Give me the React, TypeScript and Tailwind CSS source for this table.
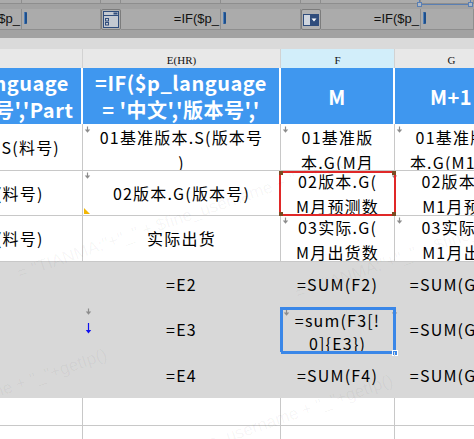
import type { ReactNode } from 'react'

const cjk = 'font-[Noto_Sans_CJK_SC,Noto_Sans,sans-serif]'

// tiny grey "down" marker drawn in the top-left corner of some cells
function Marker({ className = '' }: { className?: string }) {
	return (
		<svg className={`absolute h-[7px] w-[7px] ${className}`} viewBox="0 0 7 7">
			<path d="M3.5 0.5v3.5" stroke="#8c8c8c" strokeWidth="1.2" />
			<path d="M0.8 3.5h5.4L3.5 6.8z" fill="#8c8c8c" />
		</svg>
	)
}

function Cell({
	w,
	lines = [],
	className = '',
	children,
}: {
	w: string
	lines?: string[]
	className?: string
	children?: ReactNode
}) {
	return (
		<div className={`relative shrink-0 border-r ${w} ${className}`}>
			<div className="flex h-full w-full flex-col items-center justify-center overflow-hidden">
				{lines.map((l, i) => (
					<div key={i} className="whitespace-nowrap">
						{l}
					</div>
				))}
			</div>
			{children}
		</div>
	)
}

function Cursor() {
	return <div className="ml-[2px] mt-[3px] h-[12px] w-[3px] rounded-[1px] bg-[#1d4f8c] shadow-[inset_1px_0_0_#4f7fb8]" />
}

function Toolbar() {
	const field = 'h-full border-r border-b border-[#8e8e8e] bg-[#ababab]'
	const txt = 'flex items-center justify-end pr-[1px] text-[13px] text-[#111] font-[Liberation_Sans,Arial,sans-serif]'
	return (
		<div className="relative h-[38px] bg-[#a2a2a2]">
			{/* strip of cut-off fields above */}
			<div className="flex h-[4px]">
				<div className={`${field} w-[22px]`} />
				<div className={`${field} w-[79px]`} />
				<div className={`${field} w-[20px]`} />
				<div className={`${field} w-[100px]`} />
				<div className={`${field} w-[80px]`} />
				<div className={`${field} w-[20px]`} />
				<div className={`${field} w-[100px]`} />
				<div className={`${field} flex-1`} />
			</div>
			<div className="mt-[5px] flex h-[21px]">
				<div className={`${field} ${txt} w-[22px]`}>$p_</div>
				<div className={`${field} w-[79px]`}>
					<Cursor />
				</div>
				<div className="flex h-full w-[20px] items-center justify-center rounded-[2px] border border-[#7c7c7c] bg-[#b2b2b2]">
					<svg width="16" height="17" viewBox="0 0 16 17">
						<rect x="0.5" y="0.5" width="15" height="16" fill="#c4c9d1" stroke="#304d7c" />
						<path d="M0.5 4.5h15" stroke="#304d7c" />
						<rect x="10.5" y="1.5" width="4" height="2" fill="#304d7c" />
						<rect x="2.5" y="7.5" width="3" height="2.5" fill="none" stroke="#304d7c" />
						<rect x="2.5" y="11.5" width="3" height="2.5" fill="none" stroke="#304d7c" />
					</svg>
				</div>
				<div className={`${field} ${txt} w-[100px]`}>=IF($p_</div>
				<div className={`${field} w-[80px]`}>
					<Cursor />
				</div>
				<div className="flex h-full w-[20px] items-center justify-center rounded-[2px] border border-[#7c7c7c] bg-[#b2b2b2]">
					<svg width="16" height="12" viewBox="0 0 16 12">
						<rect x="0.5" y="0.5" width="15" height="11" fill="#cfd5de" stroke="#304d7c" />
						<rect x="7" y="1" width="8.5" height="10" fill="#304d7c" />
						<path d="M8.5 4.5h5L11 7.5z" fill="#ffffff" />
					</svg>
				</div>
				<div className={`${field} ${txt} w-[100px]`}>=IF($p_</div>
				<div className={`${field} flex-1`}>
					<Cursor />
				</div>
			</div>
			{/* selection frame on the top right */}
			<div className="absolute left-[419px] top-[-4px] h-[9px] w-[52px] border border-[#5a7fb3]">
				<div className="absolute -bottom-[3px] -left-[3px] h-[5px] w-[5px] border border-[#5a7fb3] bg-[#b0b8c4]" />
				<div className="absolute -bottom-[3px] -right-[3px] h-[5px] w-[5px] border border-[#5a7fb3] bg-[#b0b8c4]" />
			</div>
		</div>
	)
}

function Watermark({ className }: { className: string }) {
	return (
		<div
			className={`absolute origin-top-left -rotate-[19deg] whitespace-nowrap text-[17px] text-black/[0.045] font-[Liberation_Sans,Arial,sans-serif] ${className}`}
		>
			= "TIANMA:"+"_" + $fine_username + "_"+getIp()
		</div>
	)
}

export default function App() {
	const A = 'w-[198px]'
	const E = 'w-[198px]'
	const F = 'w-[114px]'
	const G = 'w-[114px]'
	const line = 'border-[#c8c8c8]'
	const gray = 'border-[#d8d8d8]'

	return (
		<div className="relative h-[439px] w-[474px] overflow-hidden bg-white">
			<Toolbar />
			<div className="h-[11px] bg-[#dadada]" />

			<div className="-ml-[115px] flex w-max flex-col">
				{/* column letters */}
				<div className="flex h-[19px] bg-[#e8e8e8] text-[11px] text-[#111] font-[Liberation_Serif,Times_New_Roman,serif]">
					<Cell w={A} className="border-[#d2d2d2]" />
					<Cell w={E} lines={['E(HR)']} className="border-[#d2d2d2] pt-[3px]" />
					<Cell w={F} lines={['F']} className="border-[#d2d2d2] bg-[#d2eefa] pt-[3px]" />
					<Cell w={G} lines={['G']} className="border-[#d2d2d2] pt-[3px]" />
				</div>

				{/* blue title row */}
				<div className={`flex h-[56px] bg-[#3f97ef] text-[20px] font-bold leading-[27px] tracking-[0.5px] text-white ${cjk}`}>
					<Cell w={A} lines={['=IF($p_language', "= '中文','料号','Part"]} className="border-r-2 border-white" />
					<Cell w={E} lines={['=IF($p_language', "= '中文','版本号','"]} className="border-r-2 border-white" />
					<Cell w={F} lines={['M']} className="border-r-2 border-white" />
					<Cell w={G} lines={['M+1']} className="border-r-2 border-white" />
				</div>

				<div className={`text-[16px] leading-[25px] tracking-[1.2px] text-black ${cjk}`}>
					<div className={`flex h-[47px] border-b ${line}`}>
						<Cell w={A} lines={['01基准版本.S(料号)']} className={line} />
						<Cell w={E} lines={['01基准版本.S(版本号', ')']} className={`${line} pt-[5px]`}>
							<Marker className="left-[1px] top-[2px]" />
						</Cell>
						<Cell w={F} lines={['01基准版', '本.G(M月']} className={`${line} pt-[5px]`}>
							<Marker className="left-[1px] top-[2px]" />
						</Cell>
						<Cell w={G} lines={['01基准版', '本.G(M1月']} className={`${line} pt-[5px]`}>
							<Marker className="left-[1px] top-[2px]" />
						</Cell>
					</div>

					<div className={`flex h-[45px] border-b ${line}`}>
						<Cell w={A} lines={['02版本.G(料号)']} className={line} />
						<Cell w={E} lines={['02版本.G(版本号)']} className={line}>
							<Marker className="left-[1px] top-[1px]" />
							<svg className="absolute bottom-[1px] left-[1px] h-[6px] w-[6px]" viewBox="0 0 6 6">
								<path d="M0 0L6 6H0z" fill="#f2b705" />
							</svg>
						</Cell>
						<Cell w={F} lines={['02版本.G(', 'M月预测数']} className={`${line} pt-[2px]`}>
							<Marker className="right-[-4px] top-[1px]" />
							<div className="absolute -bottom-[1px] -left-[2px] -right-[2px] top-0 border-2 border-[#e02828]">
								<div className="absolute -left-[2px] -top-[2px] h-[4px] w-[4px] bg-[#7a4b22]" />
								<div className="absolute -right-[2px] -top-[2px] h-[4px] w-[4px] bg-[#7a4b22]" />
								<div className="absolute -bottom-[2px] -left-[2px] h-[4px] w-[4px] bg-[#7a4b22]" />
								<div className="absolute -bottom-[2px] -right-[2px] h-[4px] w-[4px] bg-[#7a4b22]" />
							</div>
						</Cell>
						<Cell w={G} lines={['02版本.', 'M1月预']} className={`${line} pt-[2px]`} />
					</div>

					<div className={`flex h-[46px] border-b ${line}`}>
						<Cell w={A} lines={['03实际.G(料号)']} className={line} />
						<Cell w={E} lines={['实际出货']} className={line} />
						<Cell w={F} lines={['03实际.G(', 'M月出货数']} className={`${line} pt-[2px]`}>
							<Marker className="left-[1px] top-[1px]" />
						</Cell>
						<Cell w={G} lines={['03实际.', 'M1月出']} className={`${line} pt-[2px]`}>
							<Marker className="left-[1px] top-[1px]" />
						</Cell>
					</div>

					{/* grey block */}
					<div className="bg-[#d8d8d8]">
						<div className="flex h-[45px]">
							<Cell w={A} className={gray} />
							<Cell w={E} lines={['=E2']} className={gray} />
							<Cell w={F} lines={['=SUM(F2)']} className={gray} />
							<Cell w={G} lines={['=SUM(G2)']} className={gray} />
						</div>
						<div className="flex h-[45px]">
							<Cell w={A} className={gray} />
							<Cell w={E} lines={['=E3']} className={gray}>
								<Marker className="left-[2px] top-[1px]" />
								<svg className="absolute left-[2px] top-[16px] h-[11px] w-[7px]" viewBox="0 0 7 11">
									<path d="M3.5 0v8" stroke="#1010f0" strokeWidth="1.2" />
									<path d="M0.8 7h5.4L3.5 10.5z" fill="#1010f0" />
								</svg>
							</Cell>
							<Cell w={F} lines={['=sum(F3[!', '0]{E3})']} className={`${gray} pt-[4px] leading-[23px]`}>
								<Marker className="left-[2px] top-[2px]" />
								<Marker className="right-[-4px] top-[2px]" />
								<div className="absolute -bottom-[2px] -left-[1px] -right-[2px] top-0 border-[3px] border-[#3a87e8]" />
								<div className="absolute -bottom-[4px] -right-[4px] h-[6px] w-[6px] border border-white bg-[#3a87e8]" />
							</Cell>
							<Cell w={G} lines={['=SUM(G3)']} className={gray} />
						</div>
						<div className="flex h-[46px]">
							<Cell w={A} className={gray} />
							<Cell w={E} lines={['=E4']} className={gray} />
							<Cell w={F} lines={['=SUM(F4)']} className={gray} />
							<Cell w={G} lines={['=SUM(G4)']} className={gray} />
						</div>
					</div>

					<div className={`flex h-[28px] border-b ${line}`}>
						<Cell w={A} className={line} />
						<Cell w={E} className={line} />
						<Cell w={F} className={line} />
						<Cell w={G} className={line} />
					</div>
					<div className={`flex h-[28px] border-b ${line}`}>
						<Cell w={A} className={line} />
						<Cell w={E} className={line} />
						<Cell w={F} className={line} />
						<Cell w={G} className={line} />
					</div>
				</div>
			</div>

			{/* faint watermark */}
			<div className="pointer-events-none absolute inset-0">
				<Watermark className="left-[14px] top-[262px]" />
				<Watermark className="left-[292px] top-[282px]" />
				<Watermark className="left-[-246px] top-[462px]" />
				<Watermark className="left-[40px] top-[488px]" />
			</div>
		</div>
	)
}
